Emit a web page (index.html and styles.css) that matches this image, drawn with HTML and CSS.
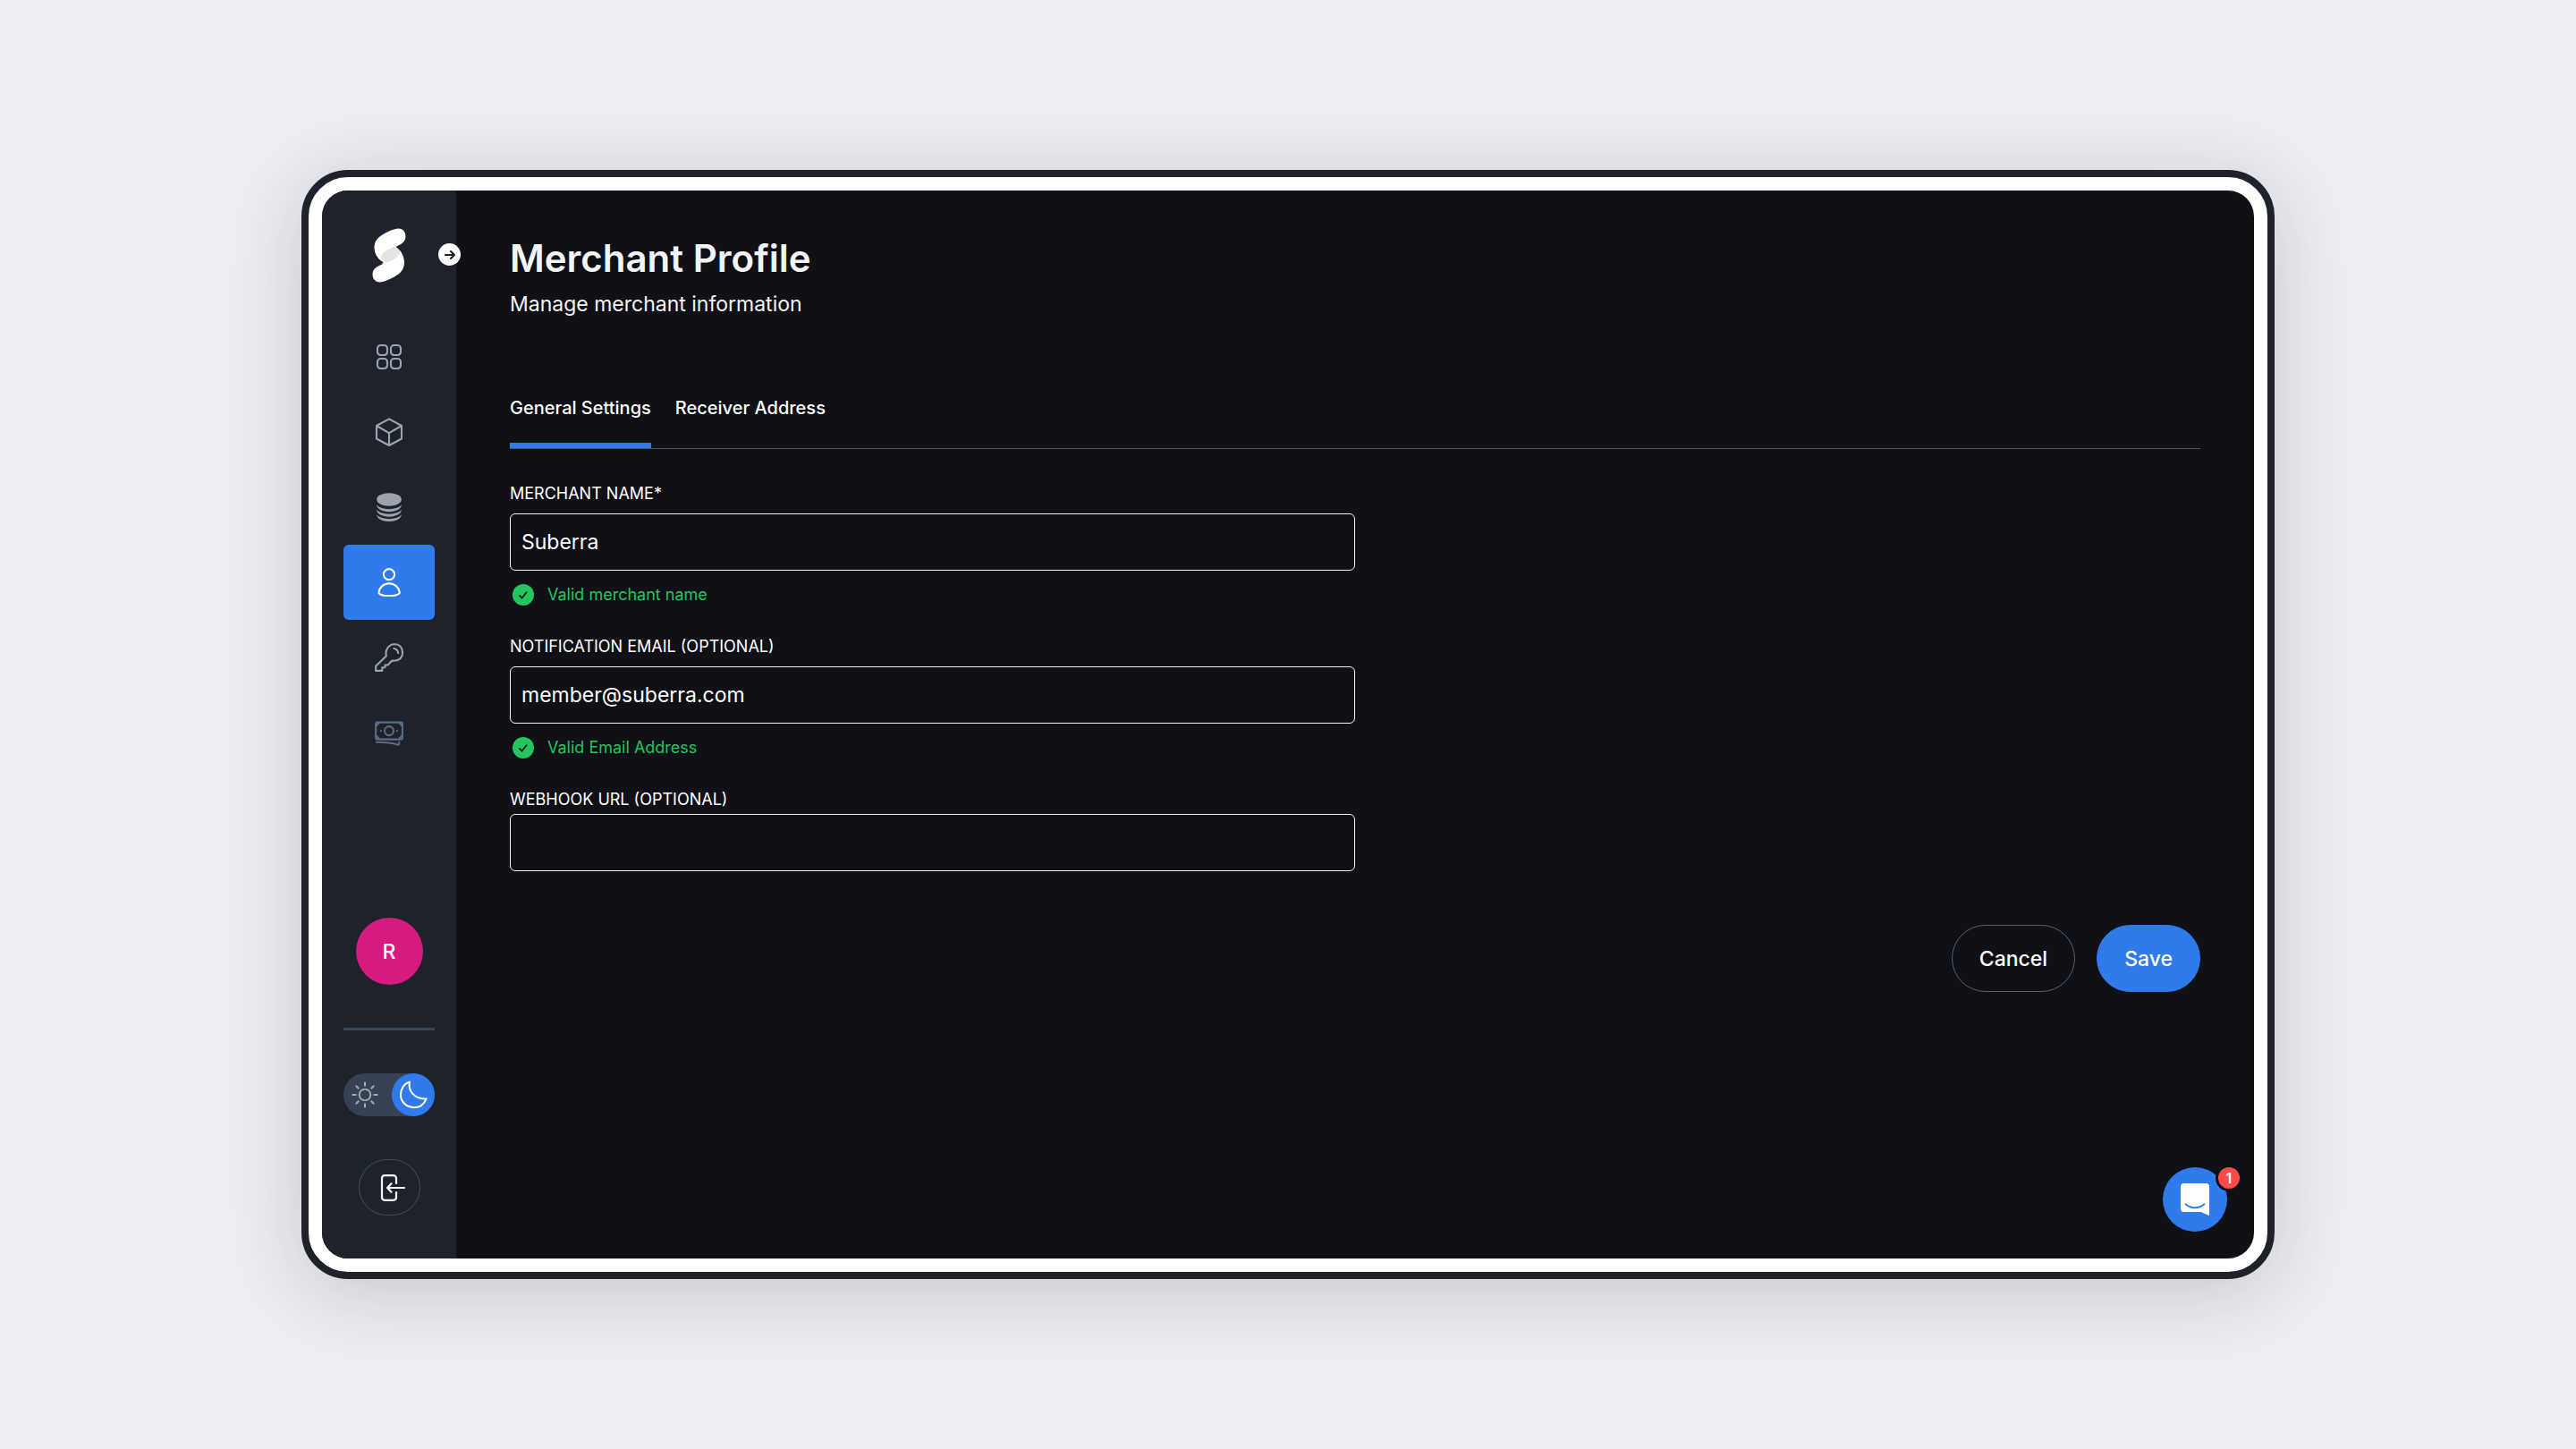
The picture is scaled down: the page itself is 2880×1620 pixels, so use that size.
FILE: index.html
```html
<!DOCTYPE html>
<html lang="en">
<head>
<meta charset="utf-8">
<title>Merchant Profile</title>
<link rel="stylesheet" href="styles.css">
</head>
<body>
<div class="device">
  <div class="screen">
    <aside class="sidebar">
      <div class="brand">
        <a class="logo" href="#" aria-label="Suberra">
          <svg viewBox="0 0 37 61" width="38" height="61" fill="#fff">
            <path d="M29 .6C35 .6 37.600 6 36.800 11C36 16 32 18 26.500 20.600L14 39C7 36 2 30 2 21.500C2 15 6 10.500 11 7.500C16 4.500 24 .6 29 .6Z"/>
            <path d="M8 60.400C2 60.400-.6 55 .2 50C1 45 5 43 10.500 40.400L24.500 20C31 24 35.500 30 35.500 38.500C35.500 46 31 50.500 26 53.500C21 56.500 13 60.400 8 60.400Z"/>
            <path fill="#e6e3e5" d="M24.500 21C29 23 31 25 30 28.500C29 33 23 36 15.500 38.800C11.500 36 9 34 10 31C11.500 26.500 18 23.500 24.500 21Z"/>
          </svg>
        </a>
        <button class="expand" type="button" aria-label="Expand menu">
          <svg viewBox="0 0 24 24" width="24" height="24" fill="none" stroke="#1e222b" stroke-width="2.200" stroke-linecap="round" stroke-linejoin="round"><path d="M7 12h10M13 8l4 4-4 4"/></svg>
        </button>
      </div>
      <nav class="nav">
        <a class="nav-item" href="#" aria-label="Dashboard">
          <svg viewBox="0 0 32 32" width="32" height="32" fill="none" stroke="currentColor" stroke-width="2.100"><rect x="3" y="3" width="11" height="11" rx="3.500"/><rect x="18" y="3" width="11" height="11" rx="3.500"/><rect x="3" y="18" width="11" height="11" rx="3.500"/><rect x="18" y="18" width="11" height="11" rx="3.500"/></svg>
        </a>
        <a class="nav-item" href="#" aria-label="Products">
          <svg viewBox="0 0 32 32" width="32" height="32" fill="none" stroke="currentColor" stroke-width="2.100" stroke-linejoin="round"><path d="M16 1.400L30 9V23.500L16 31L2 23.500V9ZM2 9L16 17.200L30 9M16 17.200V31"/></svg>
        </a>
        <a class="nav-item" href="#" aria-label="Plans">
          <svg viewBox="0 0 32 32" width="32" height="32" fill="currentColor"><ellipse cx="16" cy="7.500" rx="13.800" ry="7.300"/><path d="M2.200 13.300C4 16.200 9.500 18.200 16 18.200S28 16.200 29.800 13.300C29.800 17.800 24 21.200 16 21.200S2.200 17.800 2.200 13.300Z"/><path d="M2.200 18.800C4 21.700 9.500 23.700 16 23.700S28 21.700 29.800 18.800C29.800 23.300 24 26.700 16 26.700S2.200 23.300 2.200 18.800Z"/><path d="M2.200 24.300C4 27.200 9.500 29.200 16 29.200S28 27.200 29.800 24.300C29.800 28.800 24 32 16 32S2.200 28.800 2.200 24.300Z"/></svg>
        </a>
        <a class="nav-item active" href="#" aria-label="Merchant Profile" aria-current="page">
          <svg viewBox="0 0 32 32" width="32" height="32" fill="none" stroke="currentColor" stroke-width="2.100"><circle cx="16" cy="7.200" r="6.100"/><path d="M16 17.300C22.500 17.300 27.500 22.500 27.800 27.800C27.900 29.500 22 31.200 16 31.200S4.500 29.500 4.500 27.800C4.800 22.500 9.500 17.300 16 17.300Z"/></svg>
        </a>
        <a class="nav-item" href="#" aria-label="API keys">
          <svg viewBox="0 0 32 32" width="32" height="32" fill="none" stroke="currentColor" stroke-width="2.100" stroke-linejoin="round" stroke-linecap="round"><path d="M12.800 14.500C11.300 7 16 1.200 22 1.200S31 5.500 31 10.800C31 16.800 26 20.600 19.500 19.600L17.200 21.600L15.500 23.700L14 24.500H11.500V27.300H8.300V30.900H1.100V25.800Z"/><path d="M21.300 6C24.500 6.500 26 8.500 26.200 11.300"/></svg>
        </a>
        <a class="nav-item muted" href="#" aria-label="Payouts">
          <svg viewBox="0 0 32 32" width="32" height="32" fill="none" stroke="currentColor" stroke-width="2.100" stroke-linejoin="round"><rect x="1.100" y="4.600" width="29.800" height="19" rx="1.500"/><path d="M1.500 8.600L5 5.100M27 5.100L30.500 8.600M1.500 19.600L5 23.100M27 23.100L30.500 19.600"/><circle cx="16" cy="14.100" r="5"/><circle cx="7" cy="14.100" r=".8" fill="currentColor" stroke-width=".8"/><circle cx="25" cy="14.100" r=".8" fill="currentColor" stroke-width=".8"/><path d="M1 26.800C10 26.600 19 27.600 25.500 29.600C27.200 30.100 27.500 28.600 27.200 26.100"/></svg>
        </a>
      </nav>
      <div class="sidebar-foot">
        <button class="avatar" type="button">R</button>
        <hr class="rule">
        <button class="theme" type="button" aria-label="Use light theme">
          <span class="theme-icon">
            <svg viewBox="0 0 30 30" width="30" height="30" fill="none" stroke="currentColor" stroke-width="2.100"><circle cx="15" cy="15" r="6.300"/><path d="M15 .6v5M15 24.400v5M.6 15h5M24.400 15h5M4.800 4.800l3.500 3.500M21.700 21.700l3.500 3.500M4.800 25.200l3.500-3.500M21.700 8.300l3.500-3.500"/></svg>
          </span>
          <span class="theme-icon on">
            <svg viewBox="0 0 32 32" width="32" height="32" fill="none" stroke="currentColor" stroke-width="2" stroke-linejoin="round"><path d="M12 1.600C9.800 11 17 21.500 30.700 20.300C28 27 22.500 30.200 17 30.200C8.500 30.200 2 24 2 16C2 9 6 3.200 12 1.600Z"/></svg>
          </span>
        </button>
        <button class="logout" type="button" aria-label="Log out">
          <svg viewBox="0 0 30 30" width="30" height="30" fill="none" stroke="currentColor" stroke-width="2.200" stroke-linecap="round" stroke-linejoin="round"><path d="M19 10V4.500Q19 1.200 15.500 1.200H6.500Q3 1.200 3 4.500V25.500Q3 28.800 6.500 28.800H15.500Q19 28.800 19 25.500V20"/><path d="M28 15H9M13.500 10.300L9 15L13.500 19.700"/></svg>
        </button>
      </div>
    </aside>

    <main class="main">
      <h1 class="title">Merchant Profile</h1>
      <p class="subtitle">Manage merchant information</p>
      <div class="tabs" role="tablist">
        <button class="tab selected" type="button" role="tab" aria-selected="true">General Settings</button>
        <button class="tab" type="button" role="tab" aria-selected="false">Receiver Address</button>
      </div>
      <form class="form">
        <div class="field">
          <label class="label" for="merchant-name">MERCHANT NAME*</label>
          <input class="input" id="merchant-name" type="text" value="Suberra">
          <p class="valid">
            <svg viewBox="0 0 24 24" width="24" height="24"><circle cx="12" cy="12" r="12" fill="#22c55e"/><path d="M7.500 12.500l3 3.200 5.500-7" fill="none" stroke="#0f1117" stroke-width="1.800"/></svg>
            Valid merchant name
          </p>
        </div>
        <div class="field">
          <label class="label" for="email">NOTIFICATION EMAIL (OPTIONAL)</label>
          <input class="input" id="email" type="email" value="member@suberra.com">
          <p class="valid">
            <svg viewBox="0 0 24 24" width="24" height="24"><circle cx="12" cy="12" r="12" fill="#22c55e"/><path d="M7.500 12.500l3 3.200 5.500-7" fill="none" stroke="#0f1117" stroke-width="1.800"/></svg>
            Valid Email Address
          </p>
        </div>
        <div class="field tight">
          <label class="label" for="webhook">WEBHOOK URL (OPTIONAL)</label>
          <input class="input" id="webhook" type="url">
        </div>
        <div class="actions">
          <button class="button" type="button">Cancel</button>
          <button class="button primary" type="submit">Save</button>
        </div>
      </form>
    </main>

    <button class="chat" type="button" aria-label="Open chat">
      <svg viewBox="0 0 32 36" width="32" height="36"><path d="M3.500 0H28.500Q32 0 32 3.500V36L22.500 32H3.500Q0 32 0 28.500V3.500Q0 0 3.500 0Z" fill="#fff"/><path d="M5.500 23.300C12 28.600 20 28.600 26.500 23.300" fill="none" stroke="#2f7bec" stroke-width="2" stroke-linecap="round"/></svg>
      <span class="badge">1</span>
    </button>
  </div>
</div>
</body>
</html>
```

FILE: styles.css
```css
*,
*::before,
*::after {
  box-sizing: border-box;
}

body {
  margin: 0;
  min-height: 100vh;
  display: flex;
  padding: 190px 337px;
  background: #edeef3;
  color: #fff;
  font-family: Inter, "Liberation Sans", sans-serif;
  font-size: 23px;
}

button,
input {
  font: inherit;
  color: inherit;
}

button {
  display: flex;
  align-items: center;
  justify-content: center;
  padding: 0;
  border: 0;
  background: none;
  cursor: pointer;
}

svg {
  display: block;
  flex: none;
}

.device {
  flex: 1;
  display: flex;
  padding: 15px;
  border: 8px solid #1e222b;
  border-radius: 52px;
  background: #fff;
  box-shadow: 0 14px 88px rgba(30, 38, 45, 0.19);
}

.screen {
  position: relative;
  flex: 1;
  display: flex;
  overflow: hidden;
  border-radius: 29px;
  background: #0f1117;
}

/* Sidebar */

.sidebar {
  flex: none;
  width: 150px;
  display: flex;
  flex-direction: column;
  padding: 42px 24px 48px;
  background: #1e222b;
}

.brand {
  position: relative;
  display: flex;
  justify-content: center;
  margin-bottom: 41px;
}

.expand {
  position: absolute;
  top: 17px;
  right: -29px;
  width: 25px;
  height: 25px;
  border-radius: 50%;
  background: #fff;
}

.nav {
  display: flex;
  flex-direction: column;
}

.nav-item {
  height: 84px;
  display: flex;
  align-items: center;
  justify-content: center;
  border-radius: 6px;
  color: #9ca3af;
}

.nav-item.active {
  background: #2f7bec;
  color: #fff;
}

.nav-item.muted {
  color: #5b6b84;
}

.sidebar-foot {
  display: flex;
  flex-direction: column;
  align-items: center;
  gap: 48px;
  margin-top: auto;
}

.avatar {
  width: 75px;
  height: 75px;
  border-radius: 50%;
  background: #d61a7f;
  font-weight: 500;
}

.rule {
  width: 100%;
  height: 3px;
  margin: 0;
  border: 0;
  background: #3b4656;
}

.theme {
  width: 100%;
  height: 48px;
  justify-content: space-between;
  border-radius: 24px;
  background: #374151;
  color: #9ca3af;
}

.theme-icon {
  width: 48px;
  height: 48px;
  display: grid;
  place-items: center;
  border-radius: 50%;
}

.theme-icon.on {
  background: #2f7bec;
  color: #fff;
}

.logout {
  width: 69px;
  height: 63px;
  padding-left: 8px;
  border: 1px solid #414e5e;
  border-radius: 32px;
  color: #f3f4f6;
}

/* Main column */

.main {
  flex: 1;
  min-width: 0;
  padding: 49px 60px;
}

.title {
  margin: 0;
  font-size: 42px;
  line-height: 54px;
  font-weight: 600;
  color: #f3f4f6;
}

.subtitle {
  margin: 6px 0 0;
  line-height: 36px;
  color: #f3f4f6;
}

.tabs {
  display: flex;
  gap: 27px;
  margin-top: 71px;
  border-bottom: 1px solid #4b5563;
}

.tab {
  padding: 12px 0 24px;
  border-bottom: 6px solid transparent;
  font-size: 20px;
  line-height: 30px;
  font-weight: 500;
}

.tab.selected {
  border-color: #2f7bec;
}

.form {
  padding-top: 36px;
}

.field {
  width: 50%;
  margin-bottom: 31px;
}

.label {
  display: block;
  margin-bottom: 9px;
  font-size: 18px;
  line-height: 27px;
}

.tight .label {
  margin-bottom: 3px;
}

.input {
  display: block;
  width: 100%;
  height: 64px;
  padding: 0 12px;
  border: 1px solid #f3f4f6;
  border-radius: 6px;
  background: transparent;
  outline: 0;
}

.valid {
  display: flex;
  align-items: center;
  gap: 15px;
  margin: 13px 0 0;
  padding-left: 3px;
  font-size: 18px;
  line-height: 27px;
  color: #22c55e;
}

.actions {
  display: flex;
  justify-content: flex-end;
  gap: 24px;
  margin-top: 60px;
}

.button {
  height: 75px;
  padding: 0 30px;
  border: 1px solid #566274;
  border-radius: 38px;
  font-weight: 500;
}

.button.primary {
  border-color: #2f7bec;
  background: #2f7bec;
}

/* Chat launcher */

.chat {
  position: absolute;
  right: 30px;
  bottom: 30px;
  width: 72px;
  height: 72px;
  border-radius: 50%;
  background: #2f7bec;
}

.badge {
  position: absolute;
  top: -3px;
  right: -17px;
  width: 30px;
  height: 30px;
  border: 3px solid #0f1117;
  border-radius: 50%;
  background: #ff4a4a;
  font-size: 16px;
  line-height: 24px;
  font-weight: 600;
}
```
